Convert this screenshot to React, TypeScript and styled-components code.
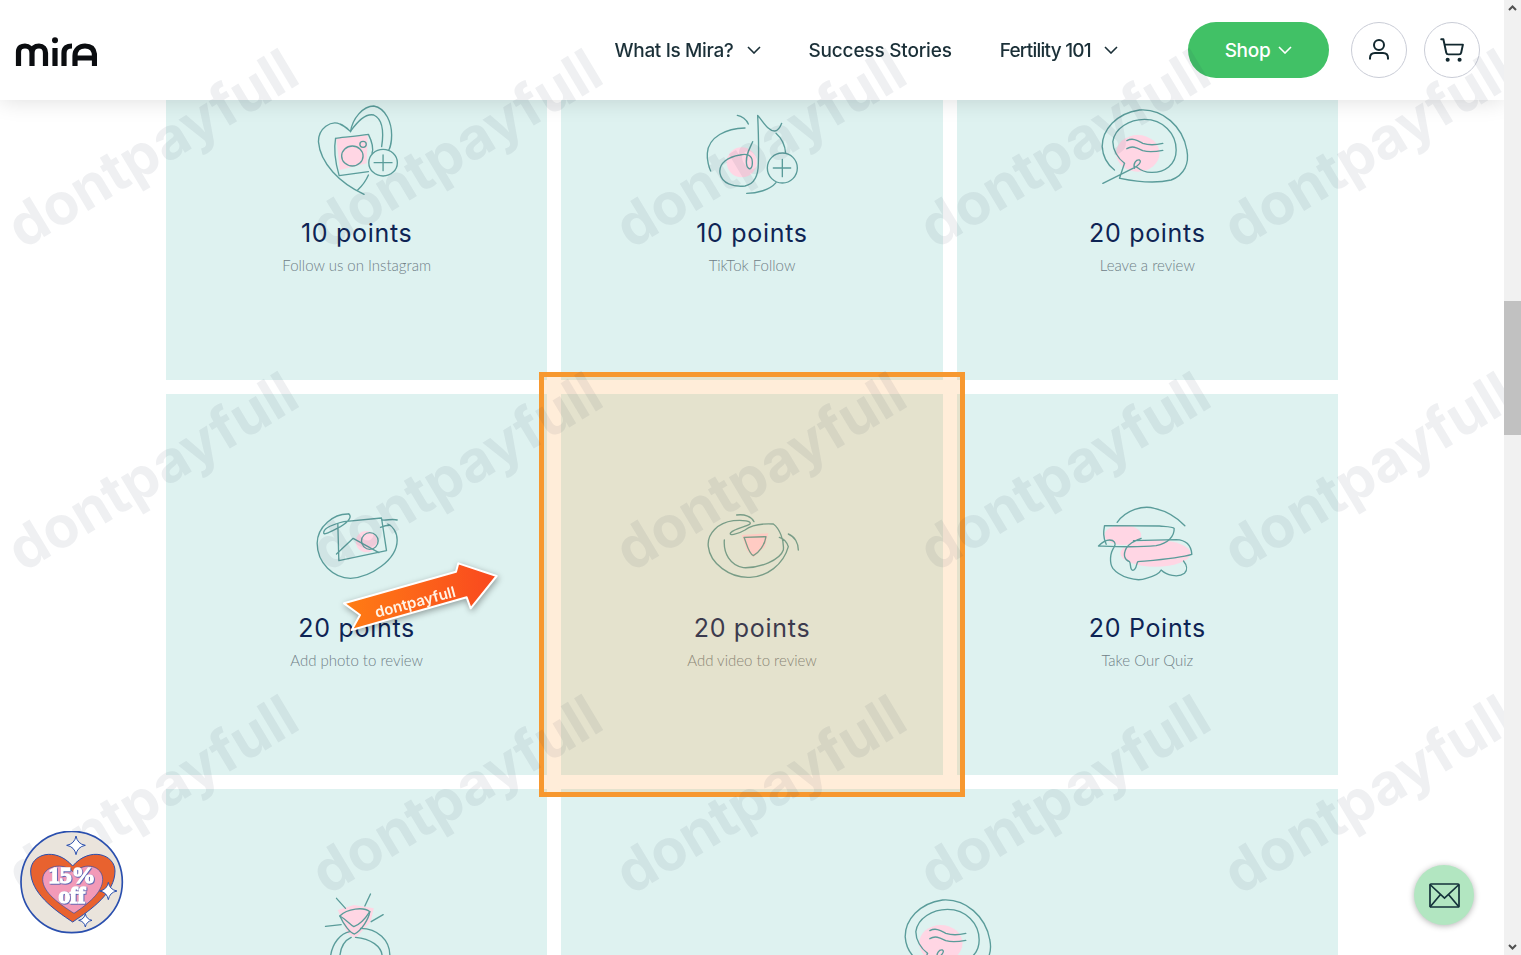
import { ReactNode } from 'react';
import styled, { createGlobalStyle } from 'styled-components';
import { ShoppingCart } from 'lucide-react';

const GlobalStyle = createGlobalStyle`
  html, body {
    margin: 0;
    height: 100%;
    overflow: hidden;
    background: #fff;
    font-family: "Inter", "Liberation Sans", sans-serif;
  }
`;

const Page = styled.div`
  height: 100vh;
  overflow: hidden;
  padding-right: 17px;
  box-sizing: border-box;
`;

const Header = styled.header`
  position: fixed;
  z-index: 5;
  top: 0;
  left: 0;
  right: 17px;
  height: 100px;
  background: #fff;
  box-shadow: 0 0 22px rgba(0, 0, 0, 0.14);
  display: flex;
  align-items: center;
  padding: 0 24px 0 15px;
`;

const Logo = styled.svg`
  width: 82px;
  height: 30px;
  margin-top: 4px;
  fill: none;
  stroke: #0b0d10;
  stroke-width: 5.2;
`;

const Nav = styled.nav`
  margin-left: auto;
  display: flex;
  align-items: center;
`;

const NavItem = styled.a<{ $tracking?: number }>`
  display: flex;
  align-items: center;
  gap: 13px;
  margin-right: 48px;
  color: #1b3038;
  font-size: 19px;
  font-weight: 500;
  letter-spacing: ${(p) => p.$tracking ?? -0.25}px;
  white-space: nowrap;
`;

const Chevron = styled.svg<{ $color?: string }>`
  width: 14px;
  height: 8px;
  fill: none;
  stroke: ${(p) => p.$color ?? '#1b3038'};
  stroke-width: 1.6;
`;

const ShopButton = styled.a`
  width: 141px;
  height: 56px;
  margin: 0 22px;
  border-radius: 28px;
  background: #41c166;
  color: #fff;
  font-size: 19px;
  font-weight: 500;
  letter-spacing: -0.3px;
  display: flex;
  align-items: center;
  justify-content: center;
  gap: 8px;
`;

const RoundButton = styled.a`
  width: 56px;
  height: 56px;
  box-sizing: border-box;
  border: 1px solid #c9ccd6;
  border-radius: 50%;
  color: #12282f;
  display: flex;
  align-items: center;
  justify-content: center;
  & + & {
    margin-left: 17px;
  }
`;

const UserIcon = styled.svg`
  width: 22px;
  height: 24px;
  fill: none;
  stroke: currentColor;
  stroke-width: 2;
`;

const Grid = styled.main`
  display: grid;
  grid-template-columns: repeat(3, 1fr);
  gap: 14px;
  margin: -1px 166px 0;
`;

const Card = styled.section<{ $wide?: boolean }>`
  grid-column: ${(p) => (p.$wide ? 'span 2' : 'span 1')};
  height: 381px;
  background: #def2f0;
  display: flex;
  flex-direction: column;
  align-items: center;
  padding-top: 101px;
  box-sizing: border-box;
`;

const Doodle = styled.svg`
  width: 100px;
  height: 100px;
  flex: none;
  fill: none;
  stroke: #5a9c9a;
  stroke-width: 1.35;
  stroke-linecap: round;
  stroke-linejoin: round;
  * {
    vector-effect: non-scaling-stroke;
  }
  .blob {
    fill: #ffd6e4;
    stroke: none;
  }
`;

const Title = styled.h3`
  margin: 15.5px 0 0;
  color: #0e2454;
  font-size: 25px;
  line-height: 34px;
  font-weight: 400;
  letter-spacing: 0.7px;
`;

const Subtitle = styled.p`
  margin: 5px 0 0;
  color: #6f8087;
  font-family: "Lato", "Liberation Sans", sans-serif;
  font-size: 15px;
  line-height: 20px;
  font-weight: 300;
`;

const Highlight = styled.div`
  position: fixed;
  z-index: 6;
  left: 539px;
  top: 372px;
  width: 426px;
  height: 425px;
  box-sizing: border-box;
  border: 5px solid #f7982f;
  background: rgba(255, 160, 55, 0.19);
`;

const Arrow = styled.svg`
  position: fixed;
  z-index: 7;
  left: 340px;
  top: 555px;
  width: 165px;
  height: 95px;
  filter: drop-shadow(1px 2px 3px rgba(0, 0, 0, 0.35));
  text {
    font-family: "Inter", "Liberation Sans", sans-serif;
    font-weight: 600;
    font-size: 45px;
    fill: #fff3e6;
  }
`;

const Watermarks = styled.div`
  position: fixed;
  z-index: 8;
  left: 0;
  top: -14px;
  width: 1504px;
  height: 969px;
  overflow: hidden;
  pointer-events: none;
  display: grid;
  grid-template-columns: repeat(5, 304px);
  grid-auto-rows: 323px;
`;

const Mark = styled.span`
  justify-self: center;
  align-self: center;
  transform: rotate(-31deg);
  color: rgba(50, 70, 85, 0.08);
  font-family: "Inter", "Liberation Sans", sans-serif;
  font-size: 58px;
  font-weight: 700;
  white-space: nowrap;
`;

const Badge = styled.svg`
  position: fixed;
  z-index: 9;
  left: 20px;
  top: 831px;
  width: 104px;
  height: 104px;
  g {
    filter: drop-shadow(2px 2px 0 #2a4fae);
  }
  text {
    font-family: "Liberation Serif", serif;
    font-weight: 700;
    font-size: 72px;
    letter-spacing: -1px;
    text-anchor: middle;
    fill: #fff;
    stroke: #fff;
    stroke-width: 4;
  }
`;

const MailButton = styled.a`
  position: fixed;
  z-index: 9;
  left: 1414px;
  top: 865px;
  width: 60px;
  height: 60px;
  border-radius: 50%;
  background: #b2e6c1;
  box-shadow: 0 1px 6px rgba(0, 0, 0, 0.3);
  display: flex;
  align-items: center;
  justify-content: center;
`;

const MailIcon = styled.svg`
  width: 31px;
  height: 25px;
  fill: none;
  stroke: #14323a;
  stroke-width: 1.7;
`;

const Scrollbar = styled.div`
  position: fixed;
  z-index: 10;
  top: 0;
  right: 0;
  bottom: 0;
  width: 17px;
  background: #f1f1f1;
  display: flex;
  flex-direction: column;
  align-items: center;
  justify-content: space-between;
`;

const ScrollArrow = styled.svg`
  width: 9px;
  height: 6px;
  margin: 5px 0;
  fill: none;
  stroke: #505050;
  stroke-width: 2;
`;

const ScrollThumb = styled.div`
  position: absolute;
  top: 301px;
  left: 0;
  width: 17px;
  height: 134px;
  background: #c1c1c1;
`;

const InstagramIcon = () => (
  <Doodle viewBox="858 300 280 300" preserveAspectRatio="none">
    <path className="blob" d="M940 415L1028 405L1025 490L950 510Z" />
    <path d="M1018 583C950 550 895 490 890 425C890 385 925 360 950 372C965 378 975 390 980 395C985 355 1015 318 1045 318C1080 325 1095 370 1095 405C1095 425 1090 445 1087 450" />
    <path d="M980 393C1000 365 1020 340 1045 345C1065 355 1075 385 1067 440" />
    <path d="M938 415C960 412 1000 408 1030 403C1040 425 1045 445 1040 460" />
    <path d="M938 415C932 450 938 490 948 527L1030 515" />
    <path d="M1030 525C1020 550 1010 560 1000 570" />
    <circle cx="985" cy="468" r="30" />
    <circle cx="1015" cy="433" r="9" />
    <circle cx="1071" cy="488" r="40" />
    <path d="M1046 488H1096M1071 465V512" />
  </Doodle>
);

const TikTokIcon = () => (
  <Doodle viewBox="36 0 300 300">
    <circle className="blob" cx="155" cy="187" r="45" />
    <path d="M142 46C155 48 170 58 175 72" />
    <path d="M165 84C110 85 55 110 52 160C50 180 58 205 62 213" />
    <path d="M188 125C180 145 165 165 170 195C175 212 188 210 187 185C186 165 170 160 150 165C115 170 85 190 90 220C95 250 130 262 165 258C195 252 205 225 205 190C207 140 205 90 203 46C220 65 235 95 255 93C265 92 272 78 275 70" />
    <path d="M258 100C275 115 285 135 287 160" />
    <path d="M170 280C200 280 240 270 258 248" />
    <circle cx="277" cy="204" r="45" />
    <path d="M250 204H302M277 178V230" />
  </Doodle>
);

const ReviewIcon = () => (
  <Doodle viewBox="52.5 0 300 300">
    <ellipse className="blob" cx="175" cy="160" rx="65" ry="55" />
    <path d="M105 210C85 195 70 170 68 140C68 90 110 40 180 30C250 25 310 80 322 150C330 190 315 225 275 240C225 252 170 245 122 235" />
    <path d="M135 190C115 175 100 150 100 125C105 85 150 58 195 58C250 58 290 100 290 150C290 195 255 218 215 217C195 217 180 208 170 200" />
    <path d="M70 250L160 205C175 200 188 185 180 180C170 178 160 190 165 205M135 190L120 235" />
    <path d="M142 122C160 112 175 122 190 130C210 137 230 135 250 130" />
    <path d="M142 146C160 135 175 145 190 152C210 158 230 155 250 151" />
  </Doodle>
);

const PhotoIcon = () => (
  <Doodle viewBox="79.5 15 300 300">
    <circle className="blob" cx="258" cy="155" r="32" />
    <path d="M205 72C160 70 110 110 110 160C110 220 160 265 210 265C270 262 350 210 350 150C350 125 335 108 322 102" />
    <path d="M205 72C215 80 205 95 180 110C150 125 125 140 130 125C135 110 170 100 190 95L303 84L318 182L175 212L172 102" />
    <path d="M168 192L218 145L295 188" />
    <circle cx="268" cy="153" r="25" />
    <path d="M305 90C320 92 335 85 350 90M300 112C310 108 320 105 330 106" />
  </Doodle>
);

const VideoIcon = () => (
  <Doodle viewBox="36 -15 300 300">
    <path className="blob" d="M155 105L235 100L225 140L190 172L170 150Z" />
    <path d="M140 45C165 42 185 50 192 65" />
    <path d="M103 120C100 160 120 195 160 203C210 205 270 180 280 150C283 120 268 85 250 72C215 70 185 75 165 90C140 105 115 108 122 98C135 85 170 80 180 72C185 62 160 60 130 62C85 68 50 100 55 140C60 190 120 235 180 232C230 230 280 195 295 140C290 125 280 115 268 112" />
    <path d="M295 102C315 110 325 130 325 150" />
    <path d="M162 112L228 110C225 135 205 160 190 167C175 160 170 130 162 112Z" />
  </Doodle>
);

const QuizIcon = () => (
  <Doodle viewBox="52.5 0 300 300">
    <ellipse className="blob" cx="130" cy="120" rx="55" ry="30" />
    <ellipse className="blob" cx="228" cy="175" rx="105" ry="40" />
    <path d="M113 82C140 45 190 30 225 40C260 48 295 70 316 92" />
    <path d="M80 148C70 125 72 110 75 92L240 93C265 95 280 95 284 100C285 125 265 145 230 152C170 158 110 155 57 153C65 145 75 135 90 135C105 135 110 145 105 155C90 175 90 205 100 220C120 245 170 262 200 250C220 245 240 235 245 225C260 240 295 250 315 235C325 225 322 210 312 198" />
    <path d="M162 137L290 134C320 135 335 150 337 178C300 190 230 195 175 200C170 205 172 225 160 226C150 225 155 205 150 200C135 195 130 180 140 160C150 145 160 140 185 130" />
  </Doodle>
);

const RingIcon = () => (
  <Doodle viewBox="919.5 240 300 300">
    <path className="blob" d="M1012 300L1060 285L1120 295L1110 335L1065 385L1040 370Z" />
    <path d="M1008 265L1035 295M1110 252L1093 288M1148 314L1112 335M975 349L1022 344" />
    <path d="M1018 318C1040 295 1090 290 1108 305C1105 325 1085 360 1062 372C1050 370 1030 345 1018 318Z" />
    <path d="M1018 318C1040 330 1050 345 1060 350C1075 345 1095 325 1108 305" />
    <path d="M990 440C995 400 1020 370 1048 365M1080 355C1130 355 1170 390 1168 440" />
    <path d="M1018 440C1020 410 1035 390 1052 382M1065 382C1110 385 1145 410 1145 440" />
  </Doodle>
);

const star = (x: number, y: number, r: number) =>
  `M${x} ${y - r}Q${x + r * 0.15} ${y - r * 0.15} ${x + r} ${y}Q${x + r * 0.15} ${y + r * 0.15} ${x} ${y + r}Q${x - r * 0.15} ${y + r * 0.15} ${x - r} ${y}Q${x - r * 0.15} ${y - r * 0.15} ${x} ${y - r}Z`;

type CardInfo = { icon: ReactNode; title: string; text: string; wide?: boolean };

const cards: CardInfo[] = [
  { icon: <InstagramIcon />, title: '10 points', text: 'Follow us on Instagram' },
  { icon: <TikTokIcon />, title: '10 points', text: 'TikTok Follow' },
  { icon: <ReviewIcon />, title: '20 points', text: 'Leave a review' },
  { icon: <PhotoIcon />, title: '20 points', text: 'Add photo to review' },
  { icon: <VideoIcon />, title: '20 points', text: 'Add video to review' },
  { icon: <QuizIcon />, title: '20 Points', text: 'Take Our Quiz' },
  { icon: <RingIcon />, title: '', text: '' },
  { icon: <ReviewIcon />, title: '', text: '', wide: true },
];

const ChevronDown = ({ color }: { color?: string }) => (
  <Chevron viewBox="0 0 14 8" $color={color}>
    <path d="M1 1l6 6 6-6" />
  </Chevron>
);

export default function App() {
  return (
    <Page>
      <GlobalStyle />
      <Header>
        <Logo viewBox="0 0 82 30" role="img" aria-label="mira">
          <path d="M3.5 29V15C3.5 10 7 9 10 9C14 9 17 12 17 16V29M17 16C17 11 20 9 24 9C28 9 30.5 12 30.5 16V29" />
          <path d="M40 11V29" />
          <circle cx="40" cy="3.2" r="3" fill="#0b0d10" stroke="none" />
          <path d="M49 29V16C49 11 52 9 57 9" />
          <path d="M60 29V19C60 12 65 9 70 9C76 9 79.5 12 79.5 19V29M60 21H79.5" />
        </Logo>
        <Nav>
          <NavItem $tracking={-0.35}>What Is Mira? <ChevronDown /></NavItem>
          <NavItem $tracking={-0.2}>Success Stories</NavItem>
          <NavItem $tracking={-0.75}>Fertility 101 <ChevronDown /></NavItem>
          <ShopButton>Shop <ChevronDown color="#fff" /></ShopButton>
          <RoundButton>
            <UserIcon viewBox="0 0 22 24">
              <circle cx="11" cy="7" r="5" />
              <path d="M2 21.5V20C2 16.5 4.5 15 7 15H15C17.5 15 20 16.5 20 20V21.5" />
            </UserIcon>
          </RoundButton>
          <RoundButton><ShoppingCart size={26} strokeWidth={1.8} /></RoundButton>
        </Nav>
      </Header>

      <Grid>
        {cards.map((card, index) => (
          <Card key={index} $wide={card.wide}>
            {card.icon}
            {card.title && <Title>{card.title}</Title>}
            {card.text && <Subtitle>{card.text}</Subtitle>}
          </Card>
        ))}
      </Grid>

      <Highlight />

      <Arrow viewBox="180 195 495 285">
        <defs>
          <linearGradient id="arrowFill" x1="0" x2="1" y1="0" y2="0">
            <stop offset="0" stopColor="#ff7d14" />
            <stop offset="1" stopColor="#f9481f" />
          </linearGradient>
        </defs>
        <path
          d="M192 340L528 245L535 220L650 258L572 355L560 322L215 420L240 375Z"
          fill="url(#arrowFill)"
          stroke="#fff"
          strokeWidth="6"
          strokeLinejoin="round"
        />
        <text x="405" y="352" textAnchor="middle" transform="rotate(-15 405 335)">dontpayfull</text>
      </Arrow>

      <Badge viewBox="60 65 312 312">
        <circle cx="215" cy="218" r="152" fill="#eae4dc" stroke="#2a4fae" strokeWidth="5" />
        <path d="M218 338C160 300 92 250 92 185C92 135 165 110 218 170C270 110 345 135 345 185C345 250 275 300 218 338Z" fill="#e8622f" stroke="#2a4fae" strokeWidth="3" />
        <path d="M222 312C180 285 128 250 128 210C128 170 190 155 222 190C255 155 308 170 308 210C308 250 262 285 222 312Z" fill="#f29ab8" stroke="#2a4fae" strokeWidth="2" />
        <g>
          <text x="215" y="222">15%</text>
          <text x="215" y="280">off</text>
        </g>
        <path d={star(228, 108, 28)} fill="#fff" stroke="#2a4fae" strokeWidth="3" />
        <path d={star(325, 245, 26)} fill="#fff" stroke="#2a4fae" strokeWidth="3" />
        <path d={star(256, 333, 20)} fill="#fff" stroke="#2a4fae" strokeWidth="3" />
      </Badge>

      <MailButton>
        <MailIcon viewBox="0 0 31 25">
          <rect x="1" y="1" width="29" height="23" rx="1" />
          <path d="M1 1.5L15.5 15L30 1.5M1 24L11.5 11.5M30 24L19.5 11.5" />
        </MailIcon>
      </MailButton>

      <Watermarks>
        {Array.from({ length: 15 }, (_, index) => (
          <Mark key={index}>dontpayfull</Mark>
        ))}
      </Watermarks>

      <Scrollbar>
        <ScrollArrow viewBox="0 0 9 6"><path d="M1 5l3.5-3.5L8 5" /></ScrollArrow>
        <ScrollThumb />
        <ScrollArrow viewBox="0 0 9 6"><path d="M1 1l3.5 3.5L8 1" /></ScrollArrow>
      </Scrollbar>
    </Page>
  );
}
